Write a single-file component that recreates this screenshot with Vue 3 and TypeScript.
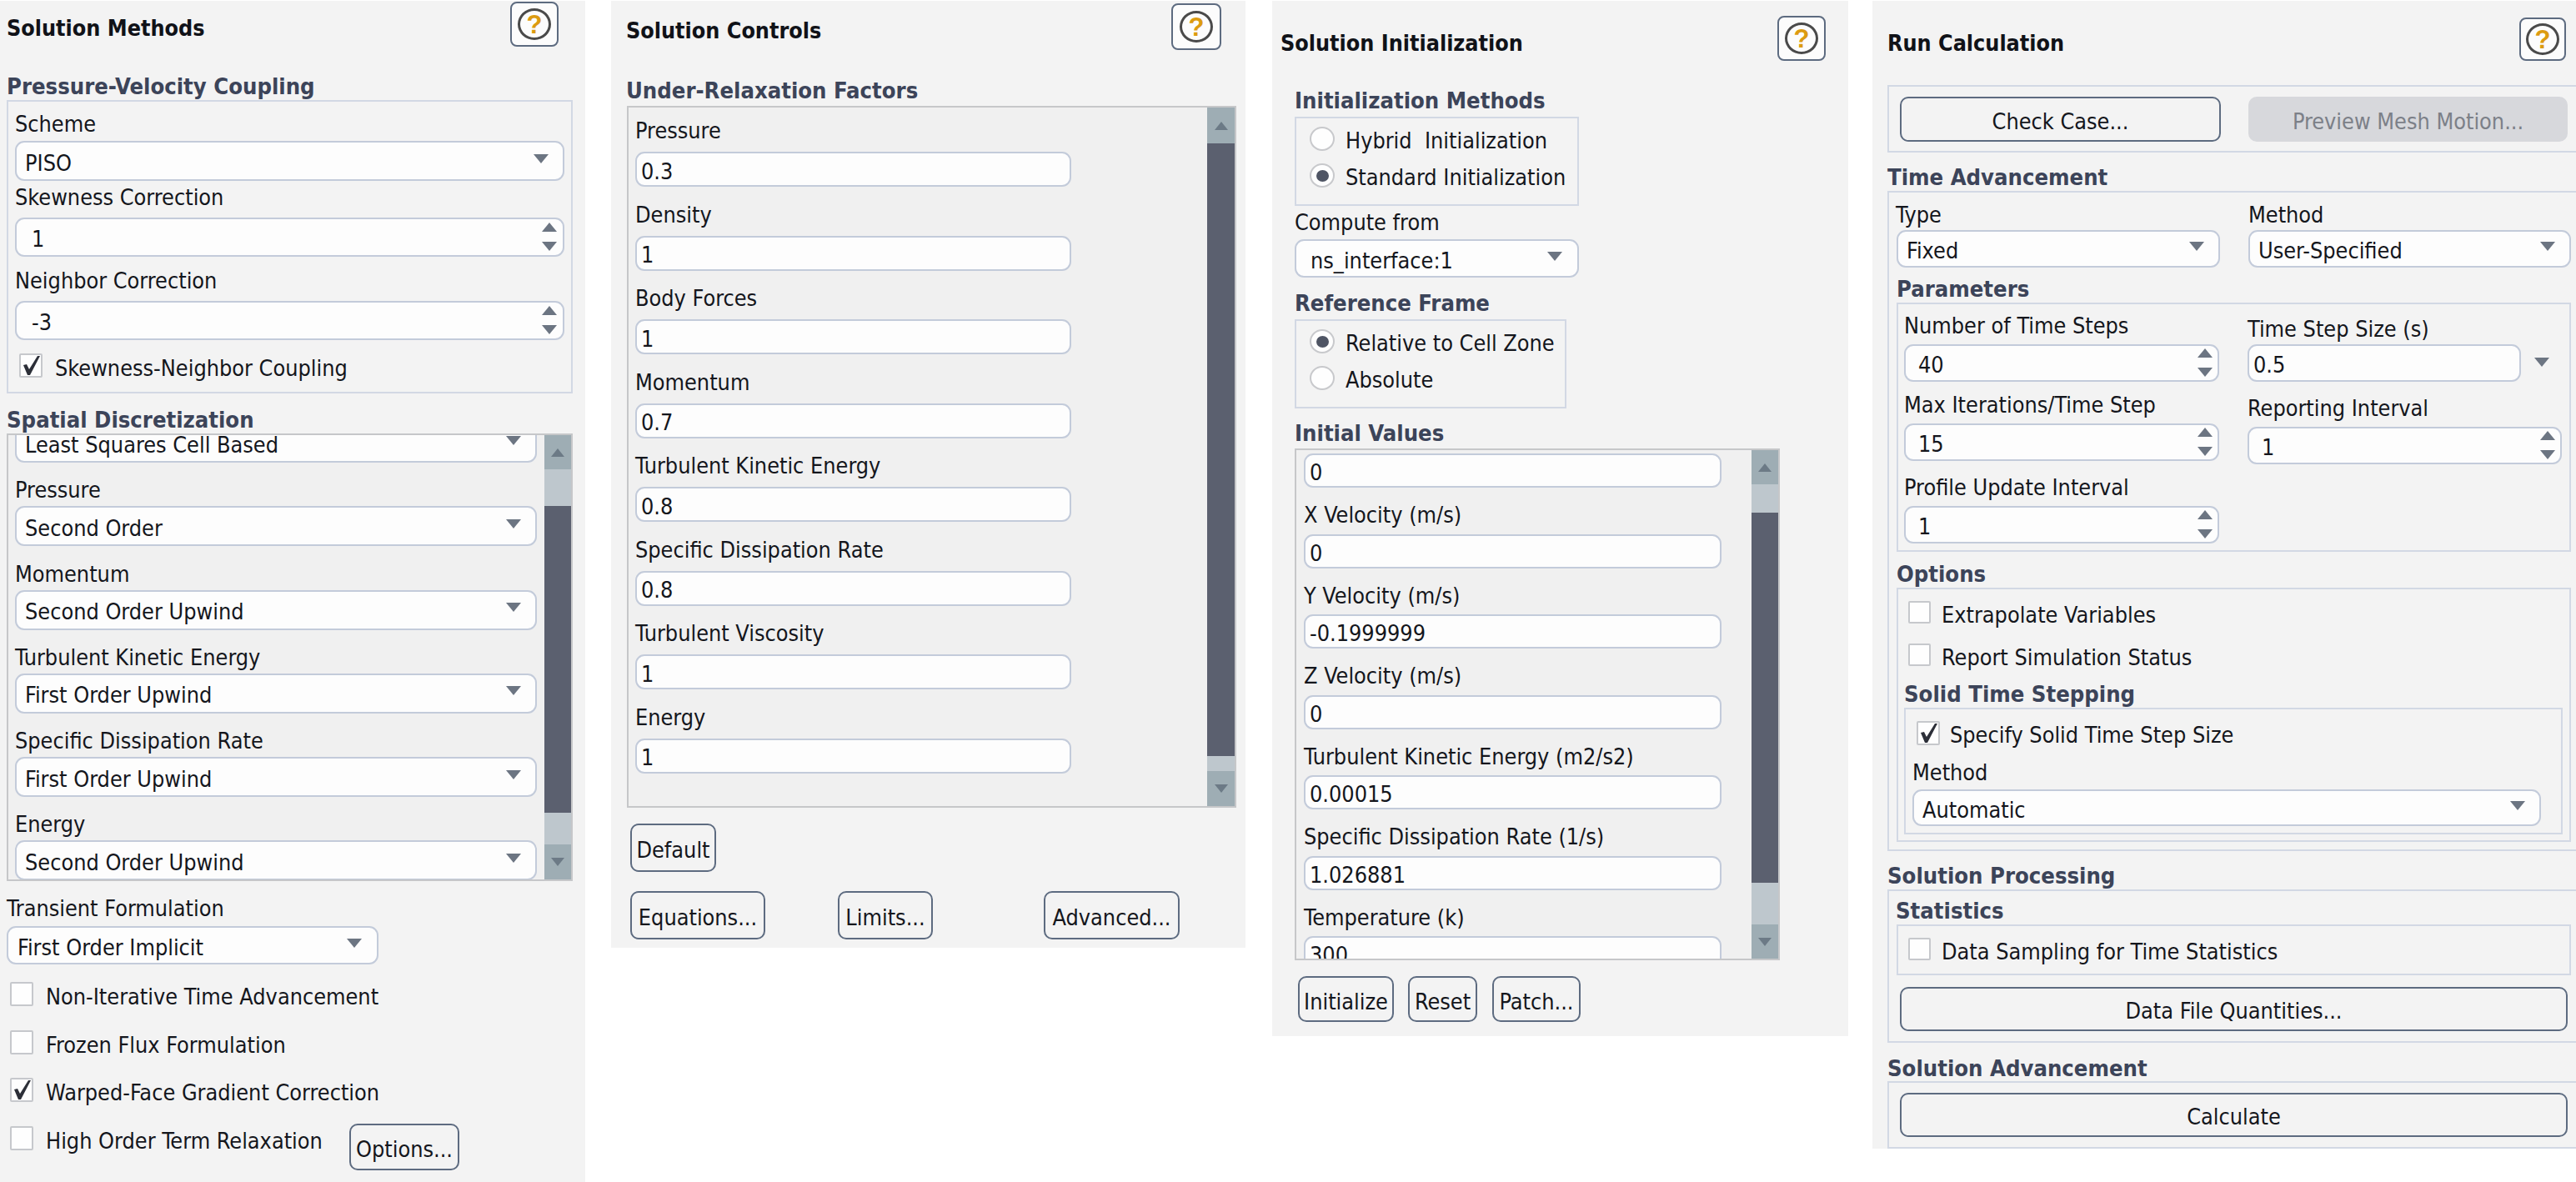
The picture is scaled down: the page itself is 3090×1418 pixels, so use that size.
<script setup lang="ts">
interface Row { label: string; value: string }
const spatial: Row[] = [
  { label: 'Pressure', value: 'Second Order' },
  { label: 'Momentum', value: 'Second Order Upwind' },
  { label: 'Turbulent Kinetic Energy', value: 'First Order Upwind' },
  { label: 'Specific Dissipation Rate', value: 'First Order Upwind' },
  { label: 'Energy', value: 'Second Order Upwind' },
]
const factors: Row[] = [
  { label: 'Pressure', value: '0.3' },
  { label: 'Density', value: '1' },
  { label: 'Body Forces', value: '1' },
  { label: 'Momentum', value: '0.7' },
  { label: 'Turbulent Kinetic Energy', value: '0.8' },
  { label: 'Specific Dissipation Rate', value: '0.8' },
  { label: 'Turbulent Viscosity', value: '1' },
  { label: 'Energy', value: '1' },
]
const initial: Row[] = [
  { label: 'X Velocity (m/s)', value: '0' },
  { label: 'Y Velocity (m/s)', value: '-0.1999999' },
  { label: 'Z Velocity (m/s)', value: '0' },
  { label: 'Turbulent Kinetic Energy (m2/s2)', value: '0.00015' },
  { label: 'Specific Dissipation Rate (1/s)', value: '1.026881' },
  { label: 'Temperature (k)', value: '300' },
]
const px = (n: number) => ({ height: n + 'px' })
const bars = {
  spatial: [41, 44, 368, 38, 42],
  factors: [43, 0, 735, 18, 42],
  initial: [41, 34, 444, 50, 41],
}
</script>

<template>
  <div class="page">
    <!-- Solution Methods -->
    <section class="panel p1">
      <header class="head">
        <h1 class="title">Solution Methods</h1>
        <button class="help"><span class="ring">?</span></button>
      </header>
      <h2 class="sec">Pressure-Velocity Coupling</h2>
      <div class="box p1-coupling">
        <div class="lab mt11">Scheme</div>
        <div class="sel mt6"><span>PISO</span><i class="arr"></i></div>
        <div class="lab mt4">Skewness Correction</div>
        <div class="spin mt10 num"><span>1</span><b class="stack"><i class="arr up"></i><i class="arr"></i></b></div>
        <div class="lab mt13">Neighbor Correction</div>
        <div class="spin mt10 num"><span>-3</span><b class="stack"><i class="arr up"></i><i class="arr"></i></b></div>
        <div class="chk-row mt16 inset5">
          <span class="chk"><svg viewBox="0 0 28 29"><path d="M5 14 9 13 12 19 22 3 25 3 13 26 10 26Z" /></svg></span>
          <span class="chk-lab">Skewness-Neighbor Coupling</span>
        </div>
      </div>
      <h2 class="sec sec-tight">Spatial Discretization</h2>
      <div class="box scrollbox p1-spatial">
        <div class="scroll-body">
          <div class="sel clipped"><span>Least Squares Cell Based</span><i class="arr"></i></div>
          <template v-for="r in spatial" :key="r.label">
            <div class="lab spatial-lab">{{ r.label }}</div>
            <div class="sel mt5"><span>{{ r.value }}</span><i class="arr"></i></div>
          </template>
        </div>
        <div class="bar">
          <div class="btn" :style="px(bars.spatial[0])"><i class="arr up"></i></div>
          <div class="track" :style="px(bars.spatial[1])"></div>
          <div class="thumb" :style="px(bars.spatial[2])"></div>
          <div class="track" :style="px(bars.spatial[3])"></div>
          <div class="btn" :style="px(bars.spatial[4])"><i class="arr"></i></div>
        </div>
      </div>
      <div class="lab transient-lab">Transient Formulation</div>
      <div class="sel transient mt7"><span>First Order Implicit</span><i class="arr"></i></div>
      <div class="chk-row p1-chk first"><span class="chk"></span><span class="chk-lab gap15">Non-Iterative Time Advancement</span></div>
      <div class="chk-row p1-chk"><span class="chk"></span><span class="chk-lab gap15">Frozen Flux Formulation</span></div>
      <div class="chk-row p1-chk">
        <span class="chk"><svg viewBox="0 0 28 29"><path d="M5 14 9 13 12 19 22 3 25 3 13 26 10 26Z" /></svg></span>
        <span class="chk-lab gap15">Warped-Face Gradient Correction</span>
      </div>
      <div class="chk-row p1-chk">
        <span class="chk"></span><span class="chk-lab gap15">High Order Term Relaxation</span>
        <button class="btn-ui options">Options...</button>
      </div>
    </section>

    <!-- Solution Controls -->
    <section class="panel p2">
      <header class="head">
        <h1 class="title">Solution Controls</h1>
        <button class="help"><span class="ring">?</span></button>
      </header>
      <h2 class="sec">Under-Relaxation Factors</h2>
      <div class="box scrollbox p2-list">
        <div class="scroll-body">
          <template v-for="r in factors" :key="r.label">
            <div class="lab factor-lab">{{ r.label }}</div>
            <div class="inp factor-inp"><span>{{ r.value }}</span></div>
          </template>
        </div>
        <div class="bar">
          <div class="btn" :style="px(bars.factors[0])"><i class="arr up"></i></div>
          <div class="thumb" :style="px(bars.factors[2])"></div>
          <div class="track" :style="px(bars.factors[3])"></div>
          <div class="btn" :style="px(bars.factors[4])"><i class="arr"></i></div>
        </div>
      </div>
      <button class="btn-ui default">Default</button>
      <div class="p2-actions">
        <button class="btn-ui">Equations...</button>
        <button class="btn-ui">Limits...</button>
        <button class="btn-ui">Advanced...</button>
      </div>
    </section>

    <!-- Solution Initialization -->
    <section class="panel p3">
      <header class="head">
        <h1 class="title">Solution Initialization</h1>
        <button class="help"><span class="ring">?</span></button>
      </header>
      <div class="p3-body">
        <h2 class="sec">Initialization Methods</h2>
        <div class="box radios methods">
          <div class="radio-row"><span class="radio"></span><span class="radio-lab">Hybrid&nbsp; Initialization</span></div>
          <div class="radio-row"><span class="radio on"></span><span class="radio-lab">Standard Initialization</span></div>
        </div>
        <div class="lab mt4">Compute from</div>
        <div class="sel compute mt6"><span>ns_interface:1</span><i class="arr"></i></div>
        <h2 class="sec frame-sec">Reference Frame</h2>
        <div class="box radios frame">
          <div class="radio-row"><span class="radio on"></span><span class="radio-lab">Relative to Cell Zone</span></div>
          <div class="radio-row"><span class="radio"></span><span class="radio-lab">Absolute</span></div>
        </div>
        <h2 class="sec values-sec">Initial Values</h2>
        <div class="box scrollbox p3-list">
          <div class="scroll-body">
            <div class="inp init-inp first-inp"><span>0</span></div>
            <template v-for="r in initial" :key="r.label">
              <div class="lab init-lab">{{ r.label }}</div>
              <div class="inp init-inp"><span>{{ r.value }}</span></div>
            </template>
          </div>
          <div class="bar">
            <div class="btn" :style="px(bars.initial[0])"><i class="arr up"></i></div>
            <div class="track" :style="px(bars.initial[1])"></div>
            <div class="thumb" :style="px(bars.initial[2])"></div>
            <div class="track" :style="px(bars.initial[3])"></div>
            <div class="btn" :style="px(bars.initial[4])"><i class="arr"></i></div>
          </div>
        </div>
      </div>
      <div class="p3-actions">
        <button class="btn-ui">Initialize</button>
        <button class="btn-ui">Reset</button>
        <button class="btn-ui">Patch...</button>
      </div>
    </section>

    <!-- Run Calculation -->
    <section class="panel p4">
      <header class="head">
        <h1 class="title">Run Calculation</h1>
        <button class="help"><span class="ring">?</span></button>
      </header>
      <div class="p4-body">
        <div class="box wide top-actions">
          <button class="btn-ui">Check Case...</button>
          <button class="btn-ui disabled">Preview Mesh Motion...</button>
        </div>
        <h2 class="sec mt14">Time Advancement</h2>
        <div class="box wide time-box">
          <div class="two mt11">
            <div class="col-type">
              <div class="lab">Type</div>
              <div class="sel type-sel mt4"><span>Fixed</span><i class="arr"></i></div>
            </div>
            <div class="col-method">
              <div class="lab">Method</div>
              <div class="sel mt4"><span>User-Specified</span><i class="arr"></i></div>
            </div>
          </div>
          <h2 class="sec params-sec">Parameters</h2>
          <div class="box sub params">
            <div class="param-left">
              <div class="lab mt10">Number of Time Steps</div>
              <div class="spin p4-spin mt8"><span>40</span><b class="stack"><i class="arr up"></i><i class="arr"></i></b></div>
              <div class="lab mt12">Max Iterations/Time Step</div>
              <div class="spin p4-spin mt8"><span>15</span><b class="stack"><i class="arr up"></i><i class="arr"></i></b></div>
              <div class="lab mt16">Profile Update Interval</div>
              <div class="spin p4-spin mt8"><span>1</span><b class="stack"><i class="arr up"></i><i class="arr"></i></b></div>
            </div>
            <div class="param-right">
              <div class="lab mt14">Time Step Size (s)</div>
              <div class="step-row mt4">
                <div class="inp step-inp"><span>0.5</span></div>
                <i class="arr"></i>
              </div>
              <div class="lab mt16">Reporting Interval</div>
              <div class="spin report mt8"><span>1</span><b class="stack"><i class="arr up"></i><i class="arr"></i></b></div>
            </div>
          </div>
          <h2 class="sec options-sec">Options</h2>
          <div class="box sub opts">
            <div class="chk-row small"><span class="chk"></span><span class="chk-lab">Extrapolate Variables</span></div>
            <div class="chk-row small report-chk"><span class="chk"></span><span class="chk-lab">Report Simulation Status</span></div>
            <h2 class="sec solid-sec">Solid Time Stepping</h2>
            <div class="box solid">
              <div class="chk-row solid-chk">
                <span class="chk"><svg viewBox="0 0 28 29"><path d="M5 14 9 13 12 19 22 3 25 3 13 26 10 26Z" /></svg></span>
                <span class="chk-lab">Specify Solid Time Step Size</span>
              </div>
              <div class="lab solid-lab">Method</div>
              <div class="sel solid-sel mt6"><span>Automatic</span><i class="arr"></i></div>
            </div>
          </div>
        </div>
        <h2 class="sec mt14">Solution Processing</h2>
        <div class="box wide processing">
          <h2 class="sec stat-sec">Statistics</h2>
          <div class="box sub stat">
            <div class="chk-row small"><span class="chk"></span><span class="chk-lab">Data Sampling for Time Statistics</span></div>
          </div>
          <button class="btn-ui full mt14">Data File Quantities...</button>
        </div>
        <h2 class="sec adv-sec">Solution Advancement</h2>
        <div class="box wide advancement">
          <button class="btn-ui full">Calculate</button>
        </div>
      </div>
    </section>
  </div>
</template>

<style>
html, body { margin: 0; background: #fff; overflow: hidden; }
</style>

<style scoped>
* { box-sizing: border-box; }
.page {
  width: 3090px; height: 1418px; display: flex; align-items: flex-start; padding-top: 1px;
  background: #fff; color: #14161c; overflow: hidden;
  font-family: "DejaVu Sans Condensed", "DejaVu Sans", sans-serif; font-stretch: condensed; font-size: 26.8px;
}
.panel { background: #f3f3f3; flex: none; overflow: hidden; }
.p1 { width: 702px; height: 1417px; }
.p2 { width: 761px; height: 1136px; margin-left: 31px; }
.p3 { width: 691px; height: 1242px; margin-left: 32px; }
.p4 { width: 844px; height: 1377px; margin-left: 29px; }

.head { display: flex; justify-content: space-between; align-items: flex-start; }
.title { margin: 0; font-size: 26.7px; font-weight: 700; line-height: 36px; color: #101218; }
.sec { margin: 0; font-size: 27.2px; font-weight: 700; line-height: 32px; height: 32px; color: #3c4459; white-space: nowrap; }
.help {
  flex: none; display: flex; align-items: center; justify-content: center; padding: 0;
  width: 58px; height: 54px; background: #fcfcfc; border: 2px solid #5d6b80; border-radius: 8px;
}
.ring {
  width: 40px; height: 38px; border: 3px solid #4a4a4a; border-radius: 50%; display: flex;
  align-items: center; justify-content: center; color: #dc9b10; font: 700 31px/1 "Liberation Sans", sans-serif;
}
.box { border: 2px solid #d2d8e4; }
.lab { height: 30px; line-height: 31px; white-space: nowrap; }
.mt4 { margin-top: 4px; } .mt5 { margin-top: 5px; } .mt6 { margin-top: 6px; } .mt7 { margin-top: 7px; }
.mt8 { margin-top: 8px; } .mt10 { margin-top: 10px; } .mt11 { margin-top: 11px; } .mt12 { margin-top: 12px; }
.mt13 { margin-top: 13px; } .mt14 { margin-top: 14px; } .mt16 { margin-top: 16px; }

.sel, .spin, .inp {
  display: flex; align-items: center; justify-content: space-between;
  background: #fdfdfd; border: 2px solid #c3cbda; border-radius: 11px; white-space: nowrap;
}
.sel { height: 48px; padding: 0 17px 0 10px; }
.sel span, .spin span, .inp span { margin-top: 4px; }
.sel > .arr { margin-top: -6px; }
.spin { height: 47px; padding: 0 7px 0 17px; }
.inp { height: 42px; padding-left: 5px; }
.arr {
  display: block; flex: none; width: 0; height: 0; border-style: solid; border-color: #6c7582 transparent transparent;
  border-width: 11px 9px 0;
}
.arr.up { border-color: transparent transparent #6c7582; border-width: 0 9px 11px; }
.stack { display: flex; flex-direction: column; gap: 12px; margin-top: -1px; }

.chk-row { display: flex; align-items: flex-start; height: 29px; }
.chk {
  flex: none; width: 28px; height: 29px; background: #fefefe; border: 2px solid #c6c8cc; border-radius: 2px;
  display: block; position: relative;
}
.chk svg { position: absolute; inset: -2px; width: 28px; height: 29px; fill: #2c2f38; }
.chk-lab { margin: 3px 0 0 15px; line-height: 30px; white-space: nowrap; }
.btn-ui {
  flex: none; height: 58px; padding: 5px 0 0; background: #f3f3f3; color: inherit; font: inherit;
  border: 2px solid #5d6b80; border-radius: 10px; white-space: nowrap; display: block;
}
.btn-ui.disabled { background: #d7d8dc; border-color: #d7d8dc; color: #7c8088; }

.scrollbox { display: flex; background: #f0f0f0; border-color: #c6c7c9; overflow: hidden; }
.scroll-body { flex: 1; min-width: 0; overflow: hidden; }
.bar { flex: none; width: 32px; display: flex; flex-direction: column; }
.btn { background: #9eadb4; display: flex; align-items: center; justify-content: center; flex: none; }
.btn .arr { border-color: #6c7a86 transparent transparent; border-width: 10px 8px 0; }
.btn .arr.up { border-color: transparent transparent #6c7a86; border-width: 0 8px 10px; }
.track { background: #bec7cd; flex: none; }
.thumb { background: #5b606f; flex: none; }

/* panel 1 */
.p1 .head { height: 87px; padding: 1px 32px 0 8px; }
.p1 .title { margin-top: 14px; }
.p1 .sec { margin-left: 8px; }
.p1 .sec-tight { margin-top: 16px; }
.p1-coupling { margin-left: 8px; width: 679px; height: 352px; padding: 0 8px; }
.inset5 { margin-left: 5px; }
.p1-coupling .chk-lab { margin-left: 15px; }
.p1-spatial { margin-left: 8px; width: 679px; height: 537px; }
.p1-spatial .scroll-body { padding: 0 9px 0 8px; }
.clipped { margin-top: -15px; }
.spatial-lab { margin-top: 17.25px; }
.num.spin { padding-left: 18px; }
.transient-lab { margin: 17px 0 0 8px; }
.transient { margin-left: 8px; width: 446px; height: 46px; padding: 0 18px 0 11px; }
.p1-chk { margin: 28.5px 0 0 12px; width: 539px; }
.p1-chk.first { margin-top: 21px; }
.options { margin: -3px 0 0 auto; width: 132px; height: 56px; }

/* panel 2 */
.p2 .head { height: 92px; padding: 3px 29px 0 18px; }
.p2 .help { width: 60px; height: 56px; }
.p2 .title { margin-top: 15px; }
.p2 .sec { margin-left: 18px; }
.p2-list { margin: 2px 0 0 19px; width: 731px; height: 842px; }
.p2-list .bar { width: 33px; }
.p2-list .scroll-body { padding-left: 8px; padding-top: 12px; }
.factor-lab { margin-top: 17.57px; }
.factor-lab:first-child { margin-top: 0; }
.factor-inp { margin-top: 11px; width: 523px; }
.default { margin: 19px 0 0 23px; width: 103px; }
.p2-actions { display: flex; margin: 23px 0 0 23px; }
.p2-actions .btn-ui:nth-child(1) { width: 162px; }
.p2-actions .btn-ui:nth-child(2) { width: 114px; margin-left: 87px; }
.p2-actions .btn-ui:nth-child(3) { width: 163px; margin-left: 133px; }

/* panel 3 */
.p3 .head { height: 104px; padding: 18px 27px 0 10px; }
.p3 .title { margin-top: 15px; }
.p3-body { padding-left: 27px; }
.radios { padding: 10px 0 0 16px; height: 107px; margin-top: 3px; }
.methods { width: 341px; }
.frame { width: 326px; }
.radio-row { display: flex; align-items: flex-start; height: 29px; margin-bottom: 15px; }
.radio { flex: none; width: 30px; height: 29px; border: 2px solid #c8c9cc; border-radius: 50%; background: #fefefe; display: flex; align-items: center; justify-content: center; }
.radio.on::after { content: ""; width: 15px; height: 14px; border-radius: 50%; background: #4f5564; }
.radio-lab { margin: 2px 0 0 13px; line-height: 30px; white-space: nowrap; }
.compute { width: 341px; height: 46px; padding: 0 18px 0 17px; }
.frame-sec { margin-top: 15px; }
.values-sec { margin-top: 14px; }
.p3-list { margin-top: 2px; width: 582px; height: 614px; }
.p3-list .scroll-body { padding-left: 9px; }
.init-inp { width: 501px; height: 41px; margin-top: 8.5px; }
.first-inp { margin-top: 4px; }
.init-lab { margin-top: 17px; }
.p3-actions { display: flex; margin: 19px 0 0 31px; }
.p3-actions .btn-ui { height: 55px; }
.p3-actions .btn-ui:nth-child(1) { width: 115px; }
.p3-actions .btn-ui:nth-child(2) { width: 83px; margin-left: 17px; }
.p3-actions .btn-ui:nth-child(3) { width: 106px; margin-left: 18px; }

/* panel 4 */
.p4 .head { height: 101px; padding: 20px 12px 0 18px; }
.p4 .help { width: 56px; height: 52px; }
.p4 .title { margin-top: 13px; }
.p4-body { padding-left: 18px; }
.wide { width: 840px; border-right: 0; }
.top-actions { height: 81px; display: flex; padding: 12px 0 0 13px; gap: 33px; }
.top-actions .btn-ui { height: 54px; width: 385px; padding-top: 4px; }
.top-actions .disabled { width: 383px; }
.time-box { height: 792px; padding-left: 8px; }
.two { display: flex; }
.col-type { width: 389px; }
.col-method { margin-left: 34px; width: 387px; }
.two .sel { height: 45px; padding: 0 17px 0 10px; }
.type-sel { margin-left: 1px; width: 388px; }
.params-sec { margin: 10px 0 0 1px; }
.sub { width: 809px; margin-left: 1px; }
.params { height: 299px; display: flex; padding-left: 7px; }
.param-left { width: 379px; }
.param-right { margin-left: 34px; width: 387px; }
.p4-spin { height: 45px; padding: 0 6px 0 15px; }
.step-row { display: flex; align-items: center; }
.step-inp { width: 328px; height: 45px; }
.step-row > .arr { margin: -3px 0 0 16px; }
.report { width: 377px; height: 45px; padding: 0 6px 0 15px; }
.options-sec { margin: 11px 0 0 1px; }
.opts { height: 305px; padding: 14px 0 0 12px; }
.small { height: 27px; }
.small .chk { width: 27px; height: 27px; }
.small .chk-lab { margin: 2px 0 0 13px; }
.report-chk { margin-top: 24px; }
.solid-sec { margin: 18px 0 0 -5px; }
.solid { margin-left: -5px; width: 790px; height: 152px; padding: 14px 0 0 8px; }
.solid-chk { height: 28px; margin-left: 5px; }
.solid-chk .chk-lab { margin: 2px 0 0 12px; }
.solid-lab { margin-top: 18px; }
.solid-sel { width: 754px; height: 44px; padding: 0 17px 0 10px; }
.processing { height: 184px; padding-left: 8px; }
.stat-sec { margin: 8px 0 0 0; }
.stat { height: 61px; padding: 14px 0 0 12px; }
.full { width: 801px; height: 53px; margin-left: 5px; padding-top: 4px; }
.adv-sec { margin-top: 15px; }
.advancement { margin-top: -1px; height: 81px; padding: 12px 0 0 13px; }
.advancement .full { margin-left: 0; }
</style>
